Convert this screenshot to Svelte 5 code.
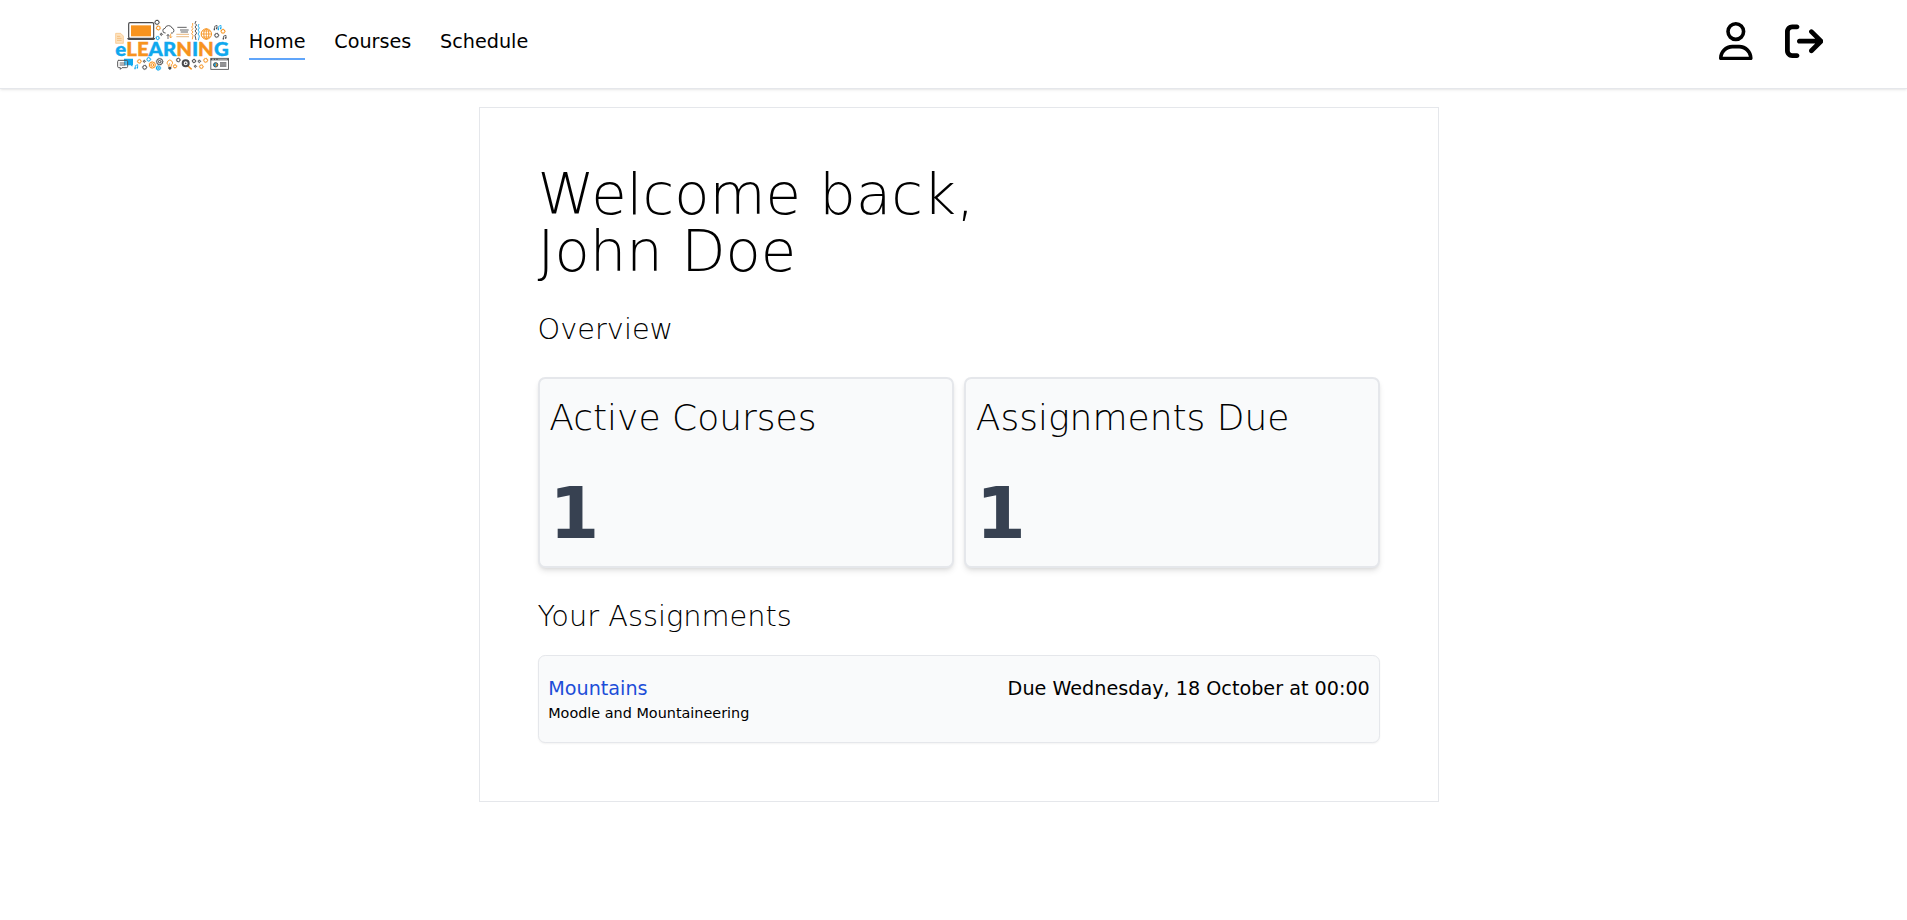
<script>
  const links = ['Home', 'Courses', 'Schedule'];
  const stats = [
    { title: 'Active Courses', value: 1 },
    { title: 'Assignments Due', value: 1 }
  ];
  const assignments = [
    { name: 'Mountains', course: 'Moodle and Mountaineering', due: 'Due Wednesday, 18 October at 00:00' }
  ];
  const grey = '#4a4a4c';
  const orange = '#f7931e';
  const blue = '#0fa8ee';
  // small cog rings scattered around the wordmark: x, y, radius, colour
  const cogs = [
    [171, 67, 6, grey], [175, 84, 5.5, orange], [173, 114, 4.5, blue], [184, 103, 2.5, grey],
    [369, 94, 5.5, orange], [350, 106, 5.5, grey], [118, 184, 5, orange], [133, 184, 2.5, grey],
    [146, 178, 5, blue], [134, 202, 5.5, grey], [157, 195, 9, orange], [157, 195, 4, orange],
    [179, 185, 9, grey], [179, 185, 3.5, grey], [175, 204, 6, blue], [175, 204, 2, blue],
    [235, 180, 5, grey], [225, 199, 4.5, orange], [282, 183, 4.5, grey], [286, 199, 2.5, grey],
    [298, 184, 3, grey], [304, 200, 5, orange], [317, 181, 5.5, orange]
  ];
</script>

<header>
  <svg class="logo" viewBox="45 54 345 162" aria-label="eLearning">
    <path d="M47 100h15l8 8v22H47z" fill="#fde3c0" stroke="#f8bd78" stroke-width="2" />
    <path d="M51 109h10M51 115h14M51 121h14" stroke="#f3ad5c" stroke-width="2" />
    <rect x="86" y="68" width="75" height="47" rx="4" fill="#fff" stroke={grey} stroke-width="3.5" />
    <rect x="93" y="76" width="60" height="33" fill={orange} />
    <path d="M82 114h83v2q-1 4-6 4H88q-5 0-6-4z" fill={grey} />
    {#each cogs as [x, y, r, c]}
      <circle cx={x} cy={y} {r} fill="none" stroke={c} stroke-width="3" />
      <circle cx={x} cy={y} r={r + 1.7} fill="none" stroke={c} stroke-width="1.4" stroke-dasharray="2 2.5" />
    {/each}
    <path d="M197 99h-1a7 7 0 0 1-1-14 11 11 0 0 1 21-1 8 8 0 0 1 1 15h-4" fill="none" stroke={grey} stroke-width="2.8" />
    <path d="M204 117v-13m-4 4 4-5 4 5" fill="none" stroke={grey} stroke-width="2.4" />
    <path d="M212 101v12m-4-4 4 5 4-5" fill="none" stroke={orange} stroke-width="2.2" />
    <path d="M232 82h28M240 90h26M242 96h22" stroke={grey} stroke-width="2.6" />
    <path d="M229 103h38M229 110h38" stroke="#eec596" stroke-width="4" />
    <path d="M278 69v8l-3 4 4 5-4 5 4 5-4 5 4 5-2 12" fill="none" stroke={orange} stroke-width="2.6" />
    <path d="M288 63l-3 7 5 5-5 6 5 6-5 6 5 6-5 7 3 14" fill="none" stroke={grey} stroke-width="2.8" />
    <path d="M297 72l-3 6 4 6-4 6 4 6-4 6 4 6-3 13" fill="none" stroke={blue} stroke-width="2.6" />
    <g fill="none" stroke={orange} stroke-width="3">
      <circle cx="319" cy="102" r="15.5" />
      <ellipse cx="319" cy="102" rx="7.5" ry="15" />
      <path d="M319 86v32M303 102h32M307 93h24M307 111h24" stroke-width="2.4" />
    </g>
    <g fill="none" stroke-width="2.4">
      <path d="M344 87v-8l7-3v8" stroke={grey} />
      <path d="M356 87v-8l7-3v8" stroke={blue} />
      <path d="M371 116v-8l7-2v8" stroke={grey} />
      <path d="M106 205v-8l7-3v8" stroke={blue} />
    </g>
    <path d="M341 88h4M348 85h4M368 116h4M375 114h4" stroke={grey} stroke-width="5" />
    <path d="M353 88h4M360 85h4M103 205h4M110 203h4" stroke={blue} stroke-width="5" />
    <text x="46" y="167.500" textLength="340" lengthAdjust="spacingAndGlyphs"><tspan fill={blue} stroke={blue}>e</tspan><tspan fill={orange} stroke={orange}>LE</tspan><tspan fill={blue} stroke={blue}>AR</tspan><tspan fill={orange} stroke={orange}>N</tspan><tspan fill={blue} stroke={blue}>I</tspan><tspan fill={orange} stroke={orange}>N</tspan><tspan fill={blue} stroke={blue}>G</tspan></text>
    <path d="M72 176h27v20h-2v4l-5-4H72z" fill={blue} />
    <path d="M55 181h24q4 0 4 4v14q0 4-4 4H66l-5 5v-5h-5q-3 0-3-4v-14q0-4 3-4z" fill="#fff" fill-opacity=".25" stroke={grey} stroke-width="2.8" />
    <path d="M59 189h17M59 195h17" stroke={grey} stroke-width="2.6" />
    <path d="M205 200v-5a8 8 0 1 1 9 0v5" fill="#fff" stroke={orange} stroke-width="2.6" />
    <path d="M209 199v-10" stroke={orange} stroke-width="2" />
    <path d="M205 200h9v5l-3 4h-3l-3-4z" fill={grey} />
    <path d="M264 198l11 10" stroke={orange} stroke-width="4.5" />
    <circle cx="257" cy="190" r="9" fill="#fff" stroke={grey} stroke-width="6" />
    <circle cx="257" cy="190" r="2.5" fill={grey} />
    <rect x="332.5" y="175" width="53" height="33" fill="#fff" stroke={grey} stroke-width="2.5" />
    <path d="M332 178.500h54" stroke={grey} stroke-width="5" />
    <path d="M336 178h6M345 178h4M353 178h29" stroke="#ddd" stroke-width="2" />
    <circle cx="347" cy="194.500" r="6.500" fill={blue} stroke={grey} stroke-width="3" />
    <path d="M347 194.500v-5a5 5 0 0 1 0 10z" fill={orange} />
    <rect x="360" y="186" width="19" height="15" fill="#858588" />
    <path d="M360 190h19M360 194h19M360 198h19" stroke="#b8b8ba" stroke-width="1" />
  </svg>
  <nav>
    {#each links as link, i}
      <a href="#{link}" class:active={i === 0}>{link}</a>
    {/each}
  </nav>
  <div class="actions">
    <svg class="user" viewBox="0 0 448 512"><path d="M304 128a80 80 0 1 0 -160 0 80 80 0 1 0 160 0zM96 128a128 128 0 1 1 256 0A128 128 0 1 1 96 128zM49.300 464H398.700c-8.900-63.300-63.300-112-129-112H178.300c-65.700 0-120.100 48.700-129 112zM0 482.300C0 383.800 79.800 304 178.300 304h91.400C368.200 304 448 383.800 448 482.300c0 16.400-13.300 29.700-29.700 29.700H29.700C13.300 512 0 498.700 0 482.300z" /></svg>
    <svg class="exit" viewBox="0 0 512 512"><path d="M502.600 278.600c12.500-12.500 12.500-32.800 0-45.300l-128-128c-12.500-12.500-32.800-12.500-45.300 0s-12.500 32.800 0 45.300L402.700 224 192 224c-17.700 0-32 14.300-32 32s14.300 32 32 32l210.700 0-73.400 73.400c-12.500 12.500-12.500 32.800 0 45.300s32.800 12.500 45.300 0l128-128zM160 96c17.700 0 32-14.300 32-32s-14.300-32-32-32L96 32C43 32 0 75 0 128L0 384c0 53 43 96 96 96l64 0c17.700 0 32-14.300 32-32s-14.300-32-32-32l-64 0c-17.700 0-32-14.300-32-32l0-256c0-17.700 14.300-32 32-32l64 0z" /></svg>
  </div>
</header>

<main>
  <h1>Welcome back,<br />John Doe</h1>
  <h2>Overview</h2>
  <section class="stats">
    {#each stats as stat}
      <article>
        <h3>{stat.title}</h3>
        <strong>{stat.value}</strong>
      </article>
    {/each}
  </section>
  <h2>Your Assignments</h2>
  {#each assignments as item}
    <div class="assignment">
      <div>
        <a href="#assignment">{item.name}</a>
        <p>{item.course}</p>
      </div>
      <span>{item.due}</span>
    </div>
  {/each}
</main>

<style>
  :global(html) { font-size: 19.2px; }
  :global(body) { margin: 0; background: #fff; color: #000; font-family: "DejaVu Sans", sans-serif; line-height: 1.5; }
  * { box-sizing: border-box; }
  a { color: inherit; text-decoration: none; }
  h1, h2, h3, p { margin: 0; }
  header {
    display: flex;
    height: 89px;
    padding: 0 83.6px 0 115px;
    border-bottom: 1px solid #e5e7eb;
    box-shadow: 0 1px 3px rgb(0 0 0 / 0.08), 0 1px 2px -1px rgb(0 0 0 / 0.08);
  }
  .logo { width: 115px; height: 54px; margin-top: 18px; }
  .logo text { font: 900 59px Lato, sans-serif; stroke-width: 1.2px; }
  nav { display: flex; align-items: flex-start; gap: 1.5rem; margin: 28px 0 0 18.8px; }
  nav a { display: block; height: 32px; border-bottom: 2px solid transparent; }
  nav a.active { border-color: #60a5fa; }
  .actions { display: flex; gap: 32px; margin: 22px 0 0 auto; }
  .actions svg { display: block; height: 2rem; }
  .user { width: 1.75rem; }
  .exit { width: 2rem; }
  main {
    width: 50rem;
    margin: 18.1px 0 0 479px;
    padding: 3rem;
    border: 1px solid #e5e7eb;
  }
  h1, h2, h3 { font-weight: 200; }
  h1 { font-size: 3rem; line-height: 1; }
  h2 { margin-top: 1.5rem; font-size: 1.5rem; line-height: 2rem; }
  .stats { display: grid; grid-template-columns: 1fr 1fr; gap: 0.55rem; margin-top: 1.5rem; }
  article {
    display: flex;
    flex-direction: column;
    justify-content: space-between;
    height: 191.6px;
    padding: 17.6px 0.5rem;
    border: 2px solid #e5e7eb;
    border-radius: 0.375rem;
    background: #f9fafb;
    box-shadow: 0 4px 6px -1px rgb(0 0 0 / 0.1), 0 2px 4px -2px rgb(0 0 0 / 0.1);
  }
  h3 { font-size: 1.875rem; line-height: 2.25rem; }
  strong { font-size: 3.75rem; line-height: 1; color: #374151; }
  .assignment {
    display: flex;
    justify-content: space-between;
    margin-top: 1rem;
    padding: 1rem 0.5rem;
    border: 1px solid #e5e7eb;
    border-radius: 0.375rem;
    background: #f9fafb;
    box-shadow: 0 1px 2px rgb(0 0 0 / 0.05);
  }
  .assignment a { display: block; color: #1d4ed8; }
  .assignment p { font-size: 0.75rem; line-height: 1rem; }
</style>
